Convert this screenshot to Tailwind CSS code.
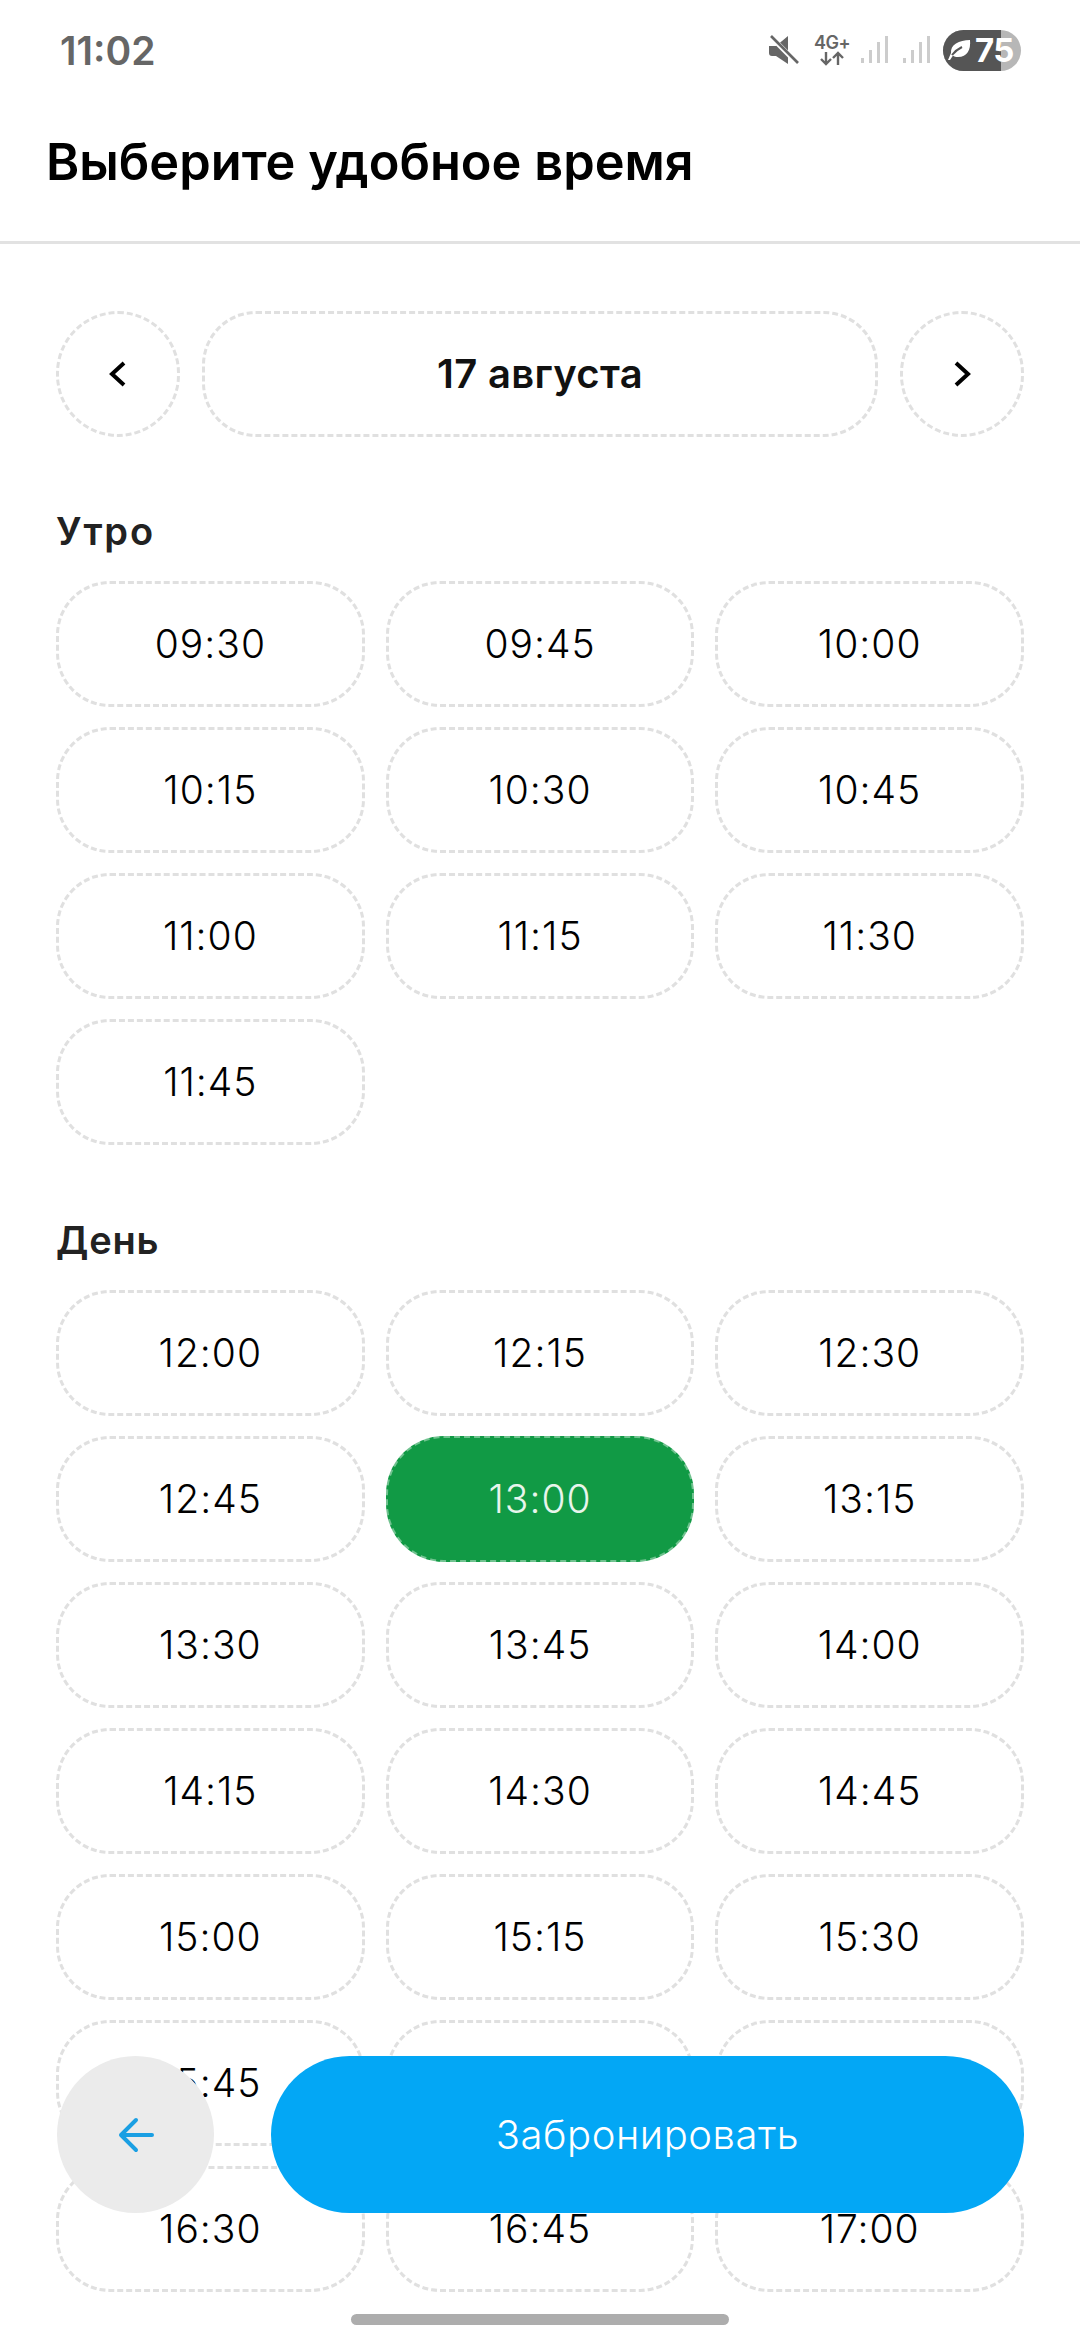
<!DOCTYPE html>
<html lang="ru">
<head>
<meta charset="utf-8">
<script src="https://cdn.jsdelivr.net/npm/@tailwindcss/browser@4"></script>
</head>
<body class="bg-white">
<div class="relative w-[1080px] h-[2340px] overflow-hidden bg-white font-['Inter',sans-serif] text-black">

  <!-- status bar -->
  <div class="h-[100px] pl-[60px] pr-[59px] flex items-center justify-between">
    <span class="text-[39px] leading-none font-semibold text-[#666666]">11:02</span>
    <div class="flex items-center">
      <svg class="w-[30px] h-[30px]" viewBox="0 0 30 30"><path d="M0 11h7l12-10v28l-12-8H3q-3 0-3-3z" fill="#666666"/><path d="M2 2l26 26" stroke="#fff" stroke-width="5"/><path d="M2 1l27 27" stroke="#666666" stroke-width="2.6"/></svg>
      <div class="ml-[16px] w-[34px] flex flex-col items-center">
        <span class="text-[18px] leading-[17px] font-semibold tracking-[-0.5px] text-[#666666]">4G+</span>
        <svg class="w-[26px] h-[15px]" viewBox="0 0 26 15" fill="none" stroke="#666666" stroke-width="2.4"><path d="M7 1v12M2 8l5 5 5-5M19 14V2M14 7l5-5 5 5"/></svg>
      </div>
      <svg class="ml-[11px] w-[28px] h-[28px]" viewBox="0 0 28 28" fill="#cccccc"><rect x="1" y="22" width="3" height="5"/><rect x="9" y="14" width="3" height="13"/><rect x="17" y="6" width="3" height="21"/><rect x="25" y="0" width="3" height="27"/></svg>
      <svg class="ml-[14px] w-[28px] h-[28px]" viewBox="0 0 28 28" fill="#cccccc"><rect x="1" y="22" width="3" height="5"/><rect x="9" y="14" width="3" height="13"/><rect x="17" y="6" width="3" height="21"/><rect x="25" y="0" width="3" height="27"/></svg>
      <div class="relative ml-[13px] w-[78px] h-[41px] rounded-full overflow-hidden bg-[#b7b7b7] flex items-center">
        <div class="absolute left-0 top-0 bottom-0 w-[58px] bg-[#555555]"></div>
        <svg class="relative ml-[5px] w-[23px] h-[24px]" viewBox="0 0 23 24"><path d="M22 2c1 10-3 17-12 17-2 0-4-.5-5-1.500L2 22H0l3-7C2 7 11 2 22 2z" fill="#fff"/><path d="M4 17C7 13 10 11 14 9" stroke="#555555" stroke-width="2" fill="none"/></svg>
        <span class="relative ml-[4px] text-[33px] leading-none font-bold text-white tracking-[-0.5px]">75</span>
      </div>
    </div>
  </div>

  <!-- header -->
  <div class="h-[144px] pl-[46px] pt-[27px] border-b-[3px] border-[#e2e2e2]">
    <h1 class="text-[50.5px] leading-[70px] font-semibold text-black">Выберите удобное время</h1>
  </div>

  <main class="px-[56px] pt-[67px]">
    <!-- date nav -->
    <div class="flex gap-x-[22px]">
      <div class="w-[124px] h-[126px] shrink-0 rounded-full border-[3px] border-dashed border-[#e0e0e0] flex items-center justify-center">
        <svg class="w-[20px] h-[28px]" viewBox="0 0 20 28" fill="none" stroke="#000" stroke-width="4"><path d="M16 3L4 14l12 11"/></svg>
      </div>
      <div class="flex-1 h-[126px] rounded-[54px] border-[3px] border-dashed border-[#e0e0e0] flex items-center justify-center text-[40px] font-semibold tracking-[0.3px] text-[#111111]">17 августа</div>
      <div class="w-[124px] h-[126px] shrink-0 rounded-full border-[3px] border-dashed border-[#e0e0e0] flex items-center justify-center">
        <svg class="ml-[2px] w-[20px] h-[28px]" viewBox="0 0 20 28" fill="none" stroke="#000" stroke-width="4"><path d="M3 3l12 11L3 25"/></svg>
      </div>
    </div>

    <h2 class="mt-[72px] mb-[28px] h-[44px] text-[38px] leading-[44px] font-semibold tracking-[2px] [font-kerning:none] text-[#222222]">Утро</h2>
    <div class="grid grid-cols-3 gap-x-[21px] gap-y-[20px] text-[39px] font-[350] tracking-[1px] text-black">
      <div class="h-[126px] rounded-[54px] border-[3px] border-dashed border-[#e0e0e0] flex items-center justify-center">09:30</div>
      <div class="h-[126px] rounded-[54px] border-[3px] border-dashed border-[#e0e0e0] flex items-center justify-center">09:45</div>
      <div class="h-[126px] rounded-[54px] border-[3px] border-dashed border-[#e0e0e0] flex items-center justify-center">10:00</div>
      <div class="h-[126px] rounded-[54px] border-[3px] border-dashed border-[#e0e0e0] flex items-center justify-center">10:15</div>
      <div class="h-[126px] rounded-[54px] border-[3px] border-dashed border-[#e0e0e0] flex items-center justify-center">10:30</div>
      <div class="h-[126px] rounded-[54px] border-[3px] border-dashed border-[#e0e0e0] flex items-center justify-center">10:45</div>
      <div class="h-[126px] rounded-[54px] border-[3px] border-dashed border-[#e0e0e0] flex items-center justify-center">11:00</div>
      <div class="h-[126px] rounded-[54px] border-[3px] border-dashed border-[#e0e0e0] flex items-center justify-center">11:15</div>
      <div class="h-[126px] rounded-[54px] border-[3px] border-dashed border-[#e0e0e0] flex items-center justify-center">11:30</div>
      <div class="h-[126px] rounded-[54px] border-[3px] border-dashed border-[#e0e0e0] flex items-center justify-center">11:45</div>
    </div>

    <h2 class="mt-[73px] mb-[28px] h-[44px] text-[38px] leading-[44px] font-semibold tracking-[0.8px] text-[#222222]">День</h2>
    <div class="grid grid-cols-3 gap-x-[21px] gap-y-[20px] text-[39px] font-[350] tracking-[1px] text-black">
      <div class="h-[126px] rounded-[54px] border-[3px] border-dashed border-[#e0e0e0] flex items-center justify-center">12:00</div>
      <div class="h-[126px] rounded-[54px] border-[3px] border-dashed border-[#e0e0e0] flex items-center justify-center">12:15</div>
      <div class="h-[126px] rounded-[54px] border-[3px] border-dashed border-[#e0e0e0] flex items-center justify-center">12:30</div>
      <div class="h-[126px] rounded-[54px] border-[3px] border-dashed border-[#e0e0e0] flex items-center justify-center">12:45</div>
      <div class="h-[126px] rounded-[58px] border-2 border-dashed border-white/40 bg-[#119a45] text-[#e8f5ec] flex items-center justify-center">13:00</div>
      <div class="h-[126px] rounded-[54px] border-[3px] border-dashed border-[#e0e0e0] flex items-center justify-center">13:15</div>
      <div class="h-[126px] rounded-[54px] border-[3px] border-dashed border-[#e0e0e0] flex items-center justify-center">13:30</div>
      <div class="h-[126px] rounded-[54px] border-[3px] border-dashed border-[#e0e0e0] flex items-center justify-center">13:45</div>
      <div class="h-[126px] rounded-[54px] border-[3px] border-dashed border-[#e0e0e0] flex items-center justify-center">14:00</div>
      <div class="h-[126px] rounded-[54px] border-[3px] border-dashed border-[#e0e0e0] flex items-center justify-center">14:15</div>
      <div class="h-[126px] rounded-[54px] border-[3px] border-dashed border-[#e0e0e0] flex items-center justify-center">14:30</div>
      <div class="h-[126px] rounded-[54px] border-[3px] border-dashed border-[#e0e0e0] flex items-center justify-center">14:45</div>
      <div class="h-[126px] rounded-[54px] border-[3px] border-dashed border-[#e0e0e0] flex items-center justify-center">15:00</div>
      <div class="h-[126px] rounded-[54px] border-[3px] border-dashed border-[#e0e0e0] flex items-center justify-center">15:15</div>
      <div class="h-[126px] rounded-[54px] border-[3px] border-dashed border-[#e0e0e0] flex items-center justify-center">15:30</div>
      <div class="h-[126px] rounded-[54px] border-[3px] border-dashed border-[#e0e0e0] flex items-center justify-center">15:45</div>
      <div class="h-[126px] rounded-[54px] border-[3px] border-dashed border-[#e0e0e0] flex items-center justify-center">16:00</div>
      <div class="h-[126px] rounded-[54px] border-[3px] border-dashed border-[#e0e0e0] flex items-center justify-center">16:15</div>
      <div class="h-[126px] rounded-[54px] border-[3px] border-dashed border-[#e0e0e0] flex items-center justify-center">16:30</div>
      <div class="h-[126px] rounded-[54px] border-[3px] border-dashed border-[#e0e0e0] flex items-center justify-center">16:45</div>
      <div class="h-[126px] rounded-[54px] border-[3px] border-dashed border-[#e0e0e0] flex items-center justify-center">17:00</div>
    </div>
  </main>

  <!-- floating footer -->
  <div class="absolute left-[57px] right-[56px] top-[2056px] flex gap-x-[57px]">
    <div class="w-[157px] h-[157px] shrink-0 rounded-full bg-[#ebebeb] flex items-center justify-center">
      <svg class="w-[36px] h-[36px]" viewBox="0 0 36 36" fill="none" stroke="#1a9fe3" stroke-width="4" stroke-linecap="round" stroke-linejoin="round"><path d="M34 18H3M18 3L3 18l15 15"/></svg>
    </div>
    <div class="flex-1 h-[157px] rounded-full bg-[#03a7f5] flex items-center justify-center text-[40px] font-[350] tracking-[0.55px] text-white">Забронировать</div>
  </div>

  <!-- home indicator -->
  <div class="absolute left-[351px] top-[2314px] w-[378px] h-[11px] rounded-full bg-[#adadad]"></div>
</div>
</body>
</html>
